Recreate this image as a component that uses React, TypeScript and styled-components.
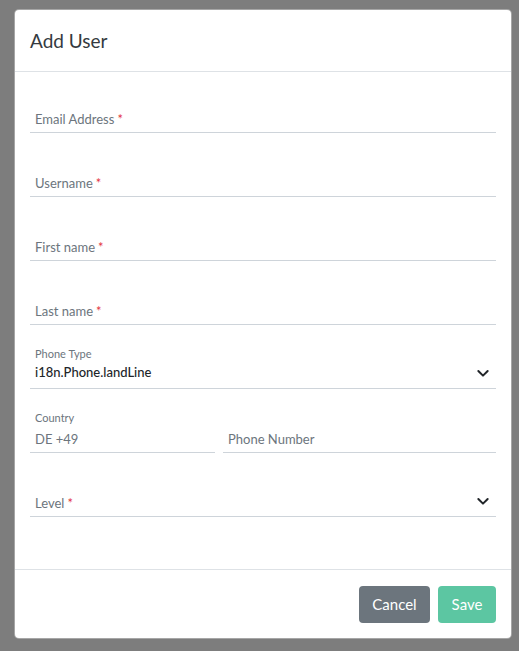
import styled, { createGlobalStyle } from 'styled-components'

const GlobalStyle = createGlobalStyle`
  html, body {
    margin: 0;
    padding: 0;
    height: 100%;
  }
  body {
    font-family: Lato, "Liberation Sans", sans-serif;
    background: #7d7d7d;
  }
`

const Backdrop = styled.div`
  width: 519px;
  height: 651px;
  box-sizing: border-box;
  padding: 9px 7px 0 14px;
  background: #7d7d7d;
`

const Modal = styled.div`
  width: 498px;
  height: 630px;
  box-sizing: border-box;
  display: flex;
  flex-direction: column;
  background: #fff;
  border: 1px solid rgba(0, 0, 0, 0.35);
  border-radius: 5px;
  overflow: hidden;
`

const Header = styled.div`
  height: 62px;
  box-sizing: border-box;
  display: flex;
  align-items: center;
  padding: 0 15px;
  border-bottom: 1px solid #dee2e6;

  h2 {
    margin: 0;
    font-size: 19px;
    font-weight: 400;
    color: #343a40;
  }
`

const Body = styled.div`
  flex: 1;
  display: flex;
  flex-direction: column;
  gap: 15px;
  padding: 12px 15px 0;
`

const Row = styled.div`
  display: grid;
  grid-template-columns: 185px 1fr;
  gap: 8px;
`

const Field = styled.div`
  position: relative;
  height: 49px;
  box-sizing: border-box;
  border-bottom: 1px solid #ced4da;
  padding: 0 5px;
`

const SmallLabel = styled.div`
  position: absolute;
  left: 5px;
  top: 7px;
  font-size: 11px;
  color: #6c757d;
`

const Placeholder = styled.div<{ $filled?: boolean }>`
  position: absolute;
  left: 5px;
  bottom: ${p => (p.$filled ? '7px' : '4px')};
  font-size: 13px;
  line-height: 18px;
  color: ${p => (p.$filled ? '#212529' : '#6c757d')};
  font-weight: ${p => (p.$filled ? 500 : 400)};
`

const Required = styled.span`
  color: #e3343f;
  margin-left: 3px;
`

const Chevron = styled.svg`
  position: absolute;
  right: 5px;
  bottom: 7px;
  width: 16px;
  height: 16px;
`

const Footer = styled.div`
  height: 69px;
  box-sizing: border-box;
  display: flex;
  align-items: center;
  justify-content: flex-end;
  gap: 8px;
  padding: 0 15px;
  border-top: 1px solid #dee2e6;
`

const Button = styled.button<{ $variant: 'secondary' | 'primary' }>`
  height: 37px;
  padding: 0 13px;
  border: none;
  border-radius: 4px;
  font-family: inherit;
  font-size: 15px;
  color: #fff;
  background: ${p => (p.$variant === 'primary' ? '#5cc6a2' : '#6c757d')};
  min-width: ${p => (p.$variant === 'primary' ? '58px' : '71px')};
`

const Down = () => (
  <Chevron viewBox="0 0 24 24" fill="none" stroke="#212529" strokeWidth="3" strokeLinecap="round" strokeLinejoin="round">
    <path d="M5 9l7 7 7-7" />
  </Chevron>
)

const TextField = ({ label, required }: { label: string; required?: boolean }) => (
  <Field>
    <Placeholder>
      {label}
      {required && <Required>*</Required>}
    </Placeholder>
  </Field>
)

const App = () => (
  <>
    <GlobalStyle />
    <Backdrop>
      <Modal>
        <Header>
          <h2>Add User</h2>
        </Header>
        <Body>
          <TextField label="Email Address" required />
          <TextField label="Username" required />
          <TextField label="First name" required />
          <TextField label="Last name" required />
          <Field>
            <SmallLabel>Phone Type</SmallLabel>
            <Placeholder $filled>i18n.Phone.landLine</Placeholder>
            <Down />
          </Field>
          <Row>
            <Field>
              <SmallLabel>Country</SmallLabel>
              <Placeholder>DE +49</Placeholder>
            </Field>
            <TextField label="Phone Number" />
          </Row>
          <Field>
            <Placeholder>
              Level<Required>*</Required>
            </Placeholder>
            <Down />
          </Field>
        </Body>
        <Footer>
          <Button $variant="secondary">Cancel</Button>
          <Button $variant="primary">Save</Button>
        </Footer>
      </Modal>
    </Backdrop>
  </>
)

export default App
